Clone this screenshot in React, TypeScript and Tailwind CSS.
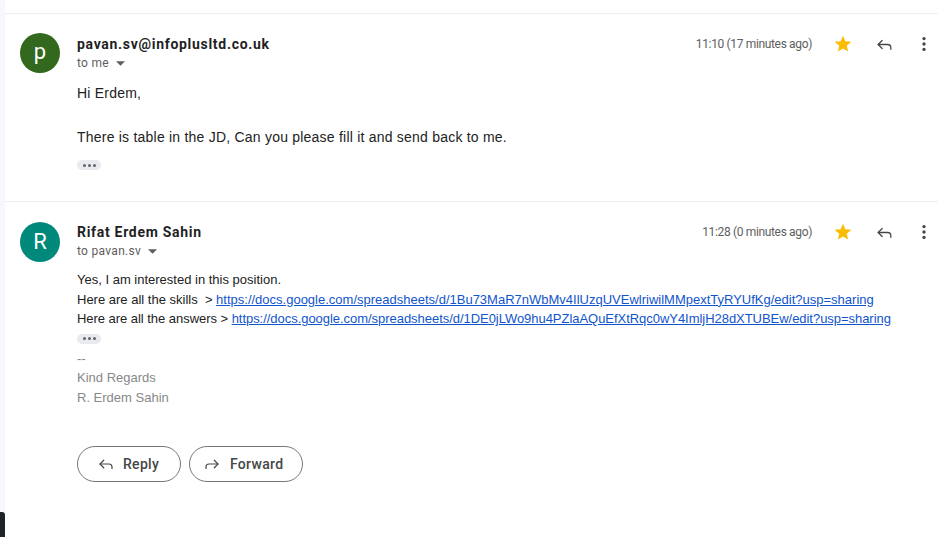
import { Reply, Forward } from "lucide-react"

const sans = "font-['Roboto','Liberation_Sans',sans-serif]"
const arial = "font-['Liberation_Sans',Arial,sans-serif]"

function Star() {
    return (
        <svg viewBox="0 0 24 24" className="size-[20px]">
            <path fill="#fbbc04" d="M12 17.27 18.18 21l-1.64-7.03L22 9.24l-7.19-.61L12 2 9.19 8.63 2 9.24l5.46 4.73L5.82 21z" />
        </svg>
    )
}

function MoreDots() {
    return (
        <svg viewBox="0 0 24 24" className="size-[20px]">
            <circle cx="12" cy="5.5" r="2" fill="#444746" />
            <circle cx="12" cy="12" r="2" fill="#444746" />
            <circle cx="12" cy="18.5" r="2" fill="#444746" />
        </svg>
    )
}

function Caret() {
    return (
        <svg viewBox="0 0 10 5" className="w-[9px] h-[5px] ml-[7px]">
            <path d="M0 0h10L5 5z" fill="#5e5e5e" />
        </svg>
    )
}

function Trimmed() {
    return (
        <div className="w-[24px] h-[10px] rounded-full bg-[#e8eaed] flex items-center justify-center gap-[2px]">
            <span className="size-[3px] rounded-full bg-[#5f6368]"></span>
            <span className="size-[3px] rounded-full bg-[#5f6368]"></span>
            <span className="size-[3px] rounded-full bg-[#5f6368]"></span>
        </div>
    )
}

function Header({ name, to, time }: { name: string; to: string; time: string }) {
    return (
        <div className="flex">
            <div className="flex-1">
                <div className={`${sans} text-[14px] leading-[20px] font-bold text-[#1f1f1f] tracking-[0.7px]`}>{name}</div>
                <div className={`${sans} text-[12px] leading-[16px] text-[#5e5e5e] tracking-[0.3px] flex items-center mt-[1px]`}>
                    {to}<Caret />
                </div>
            </div>
            <div className="flex items-start h-[20px]">
                <div className={`${sans} text-[12px] leading-[20px] text-[#5e5e5e] tracking-[-0.35px] mr-[21px]`}>{time}</div>
                <div className="w-[20px] h-[20px] flex items-center justify-center"><Star /></div>
                <div className="w-[20px] h-[20px] flex items-center justify-center ml-[21px]">
                    <Reply size={19} strokeWidth={1.6} color="#444746" />
                </div>
                <div className="w-[20px] h-[20px] flex items-center justify-center ml-[20px]"><MoreDots /></div>
            </div>
        </div>
    )
}

export default function App() {
    return (
        <div className="w-[938px] h-[537px] flex bg-white overflow-hidden">
            <div className="w-[5px] flex flex-col bg-[#f6f8fc]">
                <div className="flex-1"></div>
                <div className="h-[25px] bg-[#1f2328] rounded-tr-[3px]"></div>
            </div>
            <div className="flex-1 pt-[13px]">
                <div className="border-t border-[#eceff1]"></div>

                {/* first message */}
                <div className="flex pl-[15px] pr-[4px] pt-[19px] h-[187px]">
                    <div className="size-[40px] rounded-full bg-[#33691e] flex items-center justify-center text-white text-[22px] font-['Roboto',sans-serif] leading-none pb-[3px]">p</div>
                    <div className="flex-1 ml-[17px] pt-[1px]">
                        <Header name="pavan.sv@infoplusltd.co.uk" to="to me" time="11:10 (17 minutes ago)" />
                        <div className={`${arial} text-[14px] leading-[22px] text-[#222] tracking-[0.22px] mt-[11px]`}>
                            <div>Hi Erdem,</div>
                            <div className="h-[22px]"></div>
                            <div>There is table in the JD, Can you please fill it and send back to me.</div>
                        </div>
                        <div className="mt-[12px]"><Trimmed /></div>
                    </div>
                </div>

                <div className="border-t border-[#eceff1]"></div>

                {/* second message */}
                <div className="flex pl-[15px] pr-[4px] pt-[20px]">
                    <div className="size-[40px] rounded-full bg-[#00897b] flex items-center justify-center text-white text-[22px] font-['Roboto',sans-serif] leading-none">R</div>
                    <div className="flex-1 ml-[17px]">
                        <Header name="Rifat Erdem Sahin" to="to pavan.sv" time="11:28 (0 minutes ago)" />
                        <div className={`${arial} text-[13px] leading-[19.5px] text-[#222] mt-[11px]`}>
                            <div>Yes, I am interested in this position.</div>
                            <div className="whitespace-pre">Here are all the skills  &gt; <a className="text-[#1155cc] underline" href="#">https://docs.google.com/spreadsheets/d/1Bu73MaR7nWbMv4IlUzqUVEwlriwilMMpextTyRYUfKg/edit?usp=sharing</a></div>
                            <div className="whitespace-pre tracking-[-0.04px]">Here are all the answers &gt; <a className="text-[#1155cc] underline" href="#">https://docs.google.com/spreadsheets/d/1DE0jLWo9hu4PZlaAQuEfXtRqc0wY4ImljH28dXTUBEw/edit?usp=sharing</a></div>
                        </div>
                        <div className="mt-[5px]"><Trimmed /></div>
                        <div className={`${arial} text-[13px] leading-[19.5px] text-[#888] mt-[5px]`}>
                            <div>--</div>
                            <div>Kind Regards</div>
                            <div>R. Erdem Sahin</div>
                        </div>
                        <div className="flex gap-[8px] mt-[39px]">
                            <button className={`${sans} h-[36px] w-[104px] rounded-full border border-[#747775] flex items-center pl-[19px] text-[14px] font-medium tracking-[0.3px] text-[#444746]`}>
                                <Reply size={18} strokeWidth={1.6} />
                                <span className="ml-[8px]">Reply</span>
                            </button>
                            <button className={`${sans} h-[36px] w-[114px] rounded-full border border-[#747775] flex items-center pl-[13px] text-[14px] font-medium tracking-[0.3px] text-[#444746]`}>
                                <Forward size={18} strokeWidth={1.6} />
                                <span className="ml-[9px]">Forward</span>
                            </button>
                        </div>
                    </div>
                </div>
            </div>
        </div>
    )
}
